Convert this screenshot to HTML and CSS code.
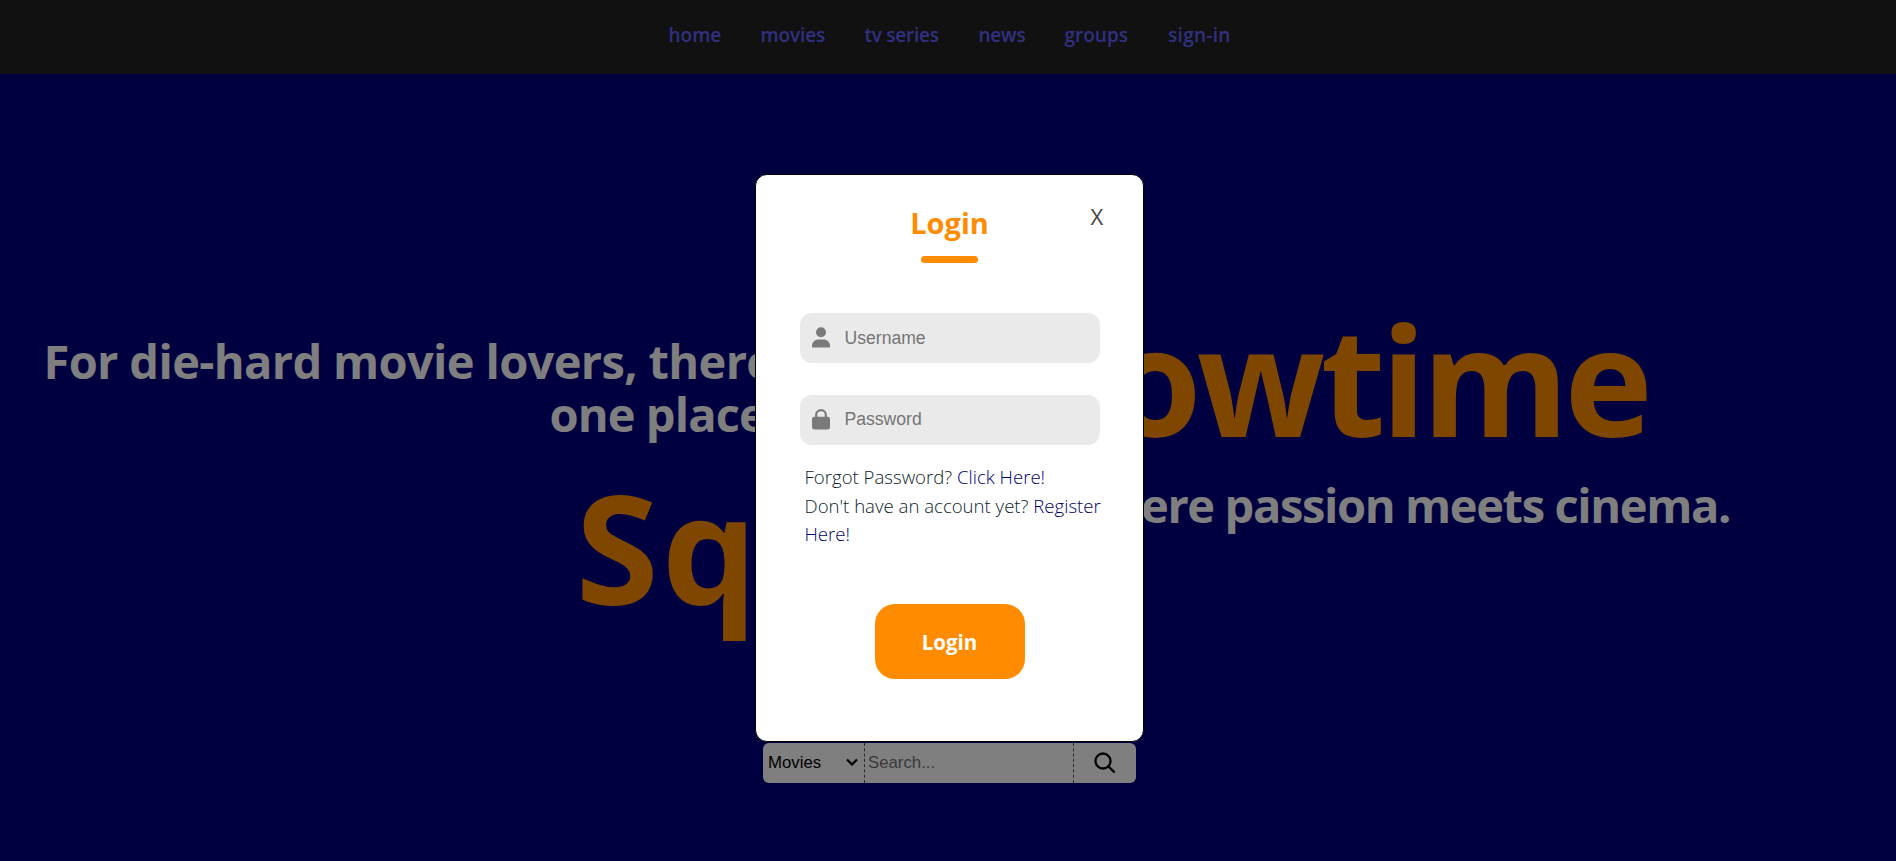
FILE: index.html
```html
<!DOCTYPE html>
<html lang="en">
<head>
<meta charset="utf-8">
<title>Showtime Square</title>
<link rel="stylesheet" href="styles.css">
</head>
<body>
<nav class="nav">
  <a class="nav-home">home</a><a class="nav-movies">movies</a><a class="nav-tv">tv series</a><a class="nav-news">news</a><a class="nav-groups">groups</a><a class="nav-sign">sign-in</a>
</nav>
<main class="hero">
  <section class="intro">
    <p class="tagline">For die-hard movie lovers, there's only</p>
    <p class="tagline second">one place to be:</p>
    <h1 class="brand square">Square</h1>
  </section>
  <section class="outro">
    <h1 class="brand">Showtime</h1>
    <p class="tagline cinema">where passion meets cinema.</p>
  </section>
</main>
<form class="search">
  <div class="category"><span>Movies</span>
    <svg width="12" height="9" viewBox="0 0 12 9"><path d="M1 1.5 6 6.5 11 1.5" fill="none" stroke="#000" stroke-width="2.2"/></svg>
  </div>
  <div class="query">Search...</div>
  <div class="go"><svg width="22" height="22" viewBox="0 0 22 22" fill="none" stroke="#000" stroke-width="2.3"><circle cx="9" cy="9" r="7.5"/><path d="M14.3 14.3 20.7 20.5"/></svg></div>
</form>
<div class="overlay">
  <section class="modal">
    <span class="close">X</span>
    <h2 class="title">Login</h2>
    <div class="bar"></div>
    <div class="field">
      <svg width="18" height="21" viewBox="0 0 18 21" fill="#7a7a7a"><circle cx="9" cy="5.3" r="5"/><path d="M0 20.5v-1.700C0 15 3 12.500 6.500 12.500h5C15 12.500 18 15 18 18.800v1.700z"/></svg>
      <span>Username</span>
    </div>
    <div class="field password">
      <svg width="18" height="21" viewBox="0 0 18 21"><path d="M4.200 9V5.700a4.800 4.500 0 0 1 9.600 0V9" fill="none" stroke="#7a7a7a" stroke-width="2.200"/><rect y="7.700" width="18" height="12.800" rx="2.300" fill="#7a7a7a"/></svg>
      <span>Password</span>
    </div>
    <div class="help">
      <div>Forgot Password? <a>Click Here!</a></div>
      <div>Don't have an account yet? <a>Register</a></div>
      <div><a>Here!</a></div>
    </div>
    <div class="submit"><span>Login</span></div>
  </section>
</div>
</body>
</html>
```
FILE: styles.css
```css
* { box-sizing: border-box; margin: 0; }
body {
  height: 861px;
  overflow: hidden;
  background: #000080;
  font-family: "Open Sans", "Noto Sans", sans-serif;
}
.nav {
  height: 74px;
  padding: 22px 0 0 668.5px;
  display: flex;
  background: #222;
  color: #6060ff;
  font-size: 19px;
  font-weight: 600;
  line-height: 27px;
  white-space: nowrap;
}
.nav-home { width: 92px; }
.nav-movies { width: 104px; letter-spacing: -.1px; }
.nav-tv { width: 114px; letter-spacing: -.25px; }
.nav-news { width: 86px; letter-spacing: -.2px; }
.nav-groups { width: 103.5px; }
.nav-sign { letter-spacing: .3px; }
.hero {
  height: 669px;
  padding-top: 221px;
  display: grid;
  grid-template-columns: 948px 948px;
}
.tagline {
  color: #fff;
  font-size: 47px;
  font-weight: 700;
  line-height: 53px;
  letter-spacing: -.65px;
  white-space: nowrap;
}
.intro { padding: 40px 0 0 43.5px; }
.tagline.second { padding-left: 506px; letter-spacing: -.9px; }
.brand {
  color: #ff8c00;
  font-size: 150px;
  font-weight: 700;
  line-height: 180px;
  white-space: nowrap;
}
.square { padding: 16px 0 0 532px; font-size: 151px; letter-spacing: 3px; }
.outro { padding-right: 248px; display: flex; flex-direction: column; align-items: flex-end; }
.outro .brand { margin-top: -6px; letter-spacing: -4.8px; }
.tagline.cinema { padding-top: 10px; margin-right: -82px; letter-spacing: -1.37px; }
.search {
  width: 373px;
  height: 40px;
  margin-left: 763px;
  display: flex;
  border-radius: 6px;
  background: #fff;
  font: 16.8px/39px "Liberation Sans", Arial, sans-serif;
}
.category {
  width: 102px;
  padding: 0 6px 1px 5px;
  display: flex;
  align-items: center;
  justify-content: space-between;
  border-right: 1px dashed #555;
}
.query { width: 209px; padding-left: 3px; border-right: 1px dashed #555; color: #757575; }
.go { flex: 1; padding-bottom: 1px; display: flex; align-items: center; justify-content: center; }
.overlay {
  position: absolute;
  inset: 0;
  padding: 174px 0 0 755px;
  background: rgba(0, 0, 0, .5);
}
.modal {
  position: relative;
  width: 389px;
  height: 568px;
  padding: 28px 44px 0;
  border: 1px solid #000;
  border-radius: 12px;
  background: #fff;
}
.close {
  position: absolute;
  top: 26px;
  left: 334.5px;
  color: #444;
  font-size: 22px;
  font-weight: 500;
  line-height: 30px;
}
.title {
  color: #ff8c00;
  font-size: 29px;
  font-weight: 700;
  line-height: 40px;
  text-align: center;
}
.bar { width: 57px; height: 7px; margin: 13px auto 50px; border-radius: 4px; background: #ff8c00; }
.field {
  width: 300px;
  height: 50px;
  margin-bottom: 32px;
  padding: 0 0 1px 12px;
  display: flex;
  align-items: center;
  gap: 14.5px;
  border-radius: 12px;
  background: #eaeaea;
  color: #757575;
  font: 17.6px/48px "Liberation Sans", Arial, sans-serif;
}
.field.password { padding-bottom: 2px; }
.help {
  margin-top: -14px;
  padding-left: 4.5px;
  color: #0c1e2c;
  font-size: 18.6px;
  font-weight: 300;
  line-height: 28.5px;
  white-space: nowrap;
}
.help a { color: #000070; }
.submit {
  width: 150px;
  height: 75px;
  margin: 55.5px auto 0;
  border-radius: 20px;
  background: #ff8c00;
  color: #fff;
  font-size: 20.5px;
  font-weight: 700;
  line-height: 77px;
  text-align: center;
}
```
